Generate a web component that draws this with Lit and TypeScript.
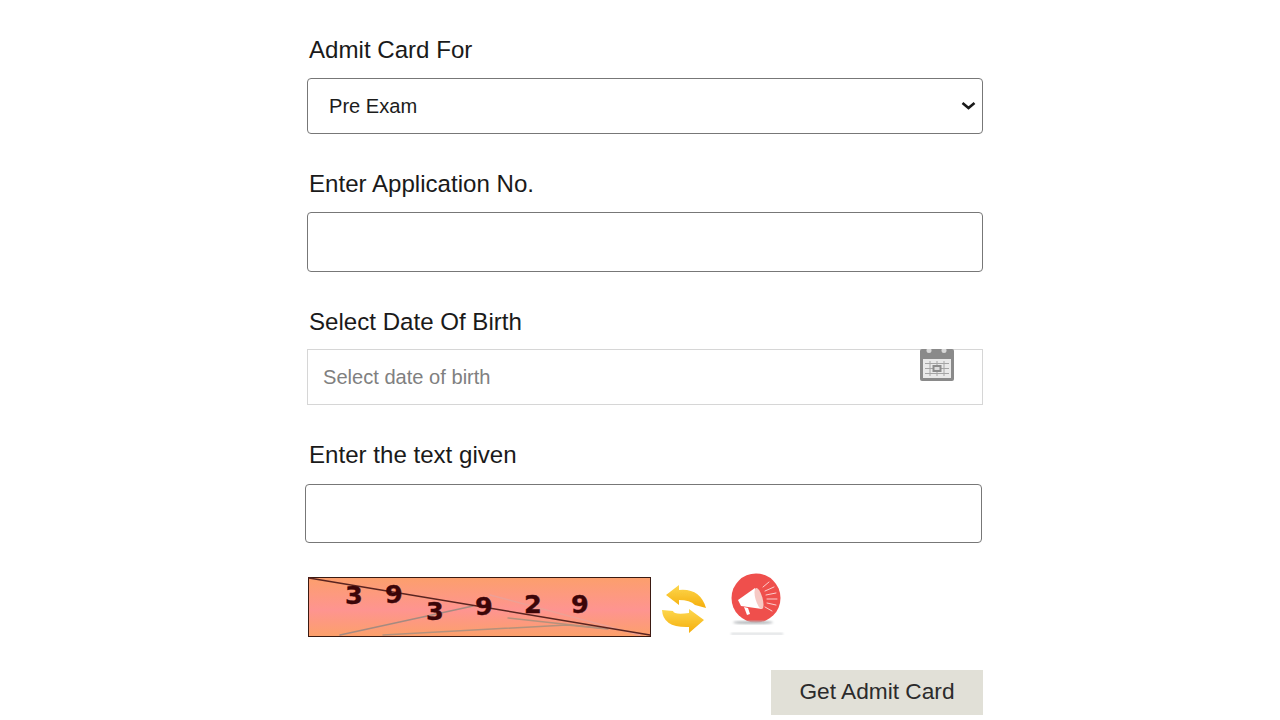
import { LitElement, html, css, svg } from "lit";
import { customElement } from "lit/decorators.js";

@customElement("app-root")
export class AppRoot extends LitElement {
  static styles = css`
    :host { display: block; background: #fff; height: 720px; overflow: hidden; font-family: "Liberation Sans", Arial, sans-serif; color: #1c1c1c; }
    .form { width: 676px; margin-left: 307px; padding-top: 36px; display: flex; flex-direction: column; }
    label { display: block; height: 28px; line-height: 28px; font-size: 24.1px; padding-left: 2px; margin-bottom: 14px; color: #1a1a1a; }
    .field { margin-bottom: 36px; }
    .field.date label { margin-bottom: 13px; }
    .field.cap label { margin-bottom: 15px; }
    .control { display: block; box-sizing: border-box; width: 100%; border: 1px solid #777; border-radius: 4px; background: #fff; font: inherit; outline: none; }
    .selwrap { position: relative; }
    select.control { height: 56px; appearance: none; -webkit-appearance: none; font-size: 20.1px; padding: 0 0 0 21px; color: #1c1c1c; }
    .chev { position: absolute; right: 7px; top: 22px; width: 15px; height: 11px; pointer-events: none; }
    input.app { height: 60px; }
    .datewrap { position: relative; }
    input.dob { height: 56px; border: 1px solid #d6d6d6; border-radius: 0; font-size: 20.1px; padding: 0 0 0 15px; color: #333; }
    input.dob::placeholder { color: #808080; opacity: 1; }
    .cal { position: absolute; left: 613px; top: 0; width: 34px; height: 33px; }
    input.capin { height: 59px; width: 677px; margin-left: -2px; }
    .caprow { display: flex; align-items: flex-start; margin-top: -6px; height: 64px; }
    .captcha { width: 343px; height: 60px; margin: 4px 0 0 1px; flex: none; }
    .refresh { width: 46px; height: 50px; margin: 11px 0 0 11px; flex: none; }
    .promo { width: 60px; height: 66px; margin: 0 0 0 18px; flex: none; }
    .actions { display: flex; justify-content: flex-end; margin-top: 33px; }
    button { width: 212px; height: 45px; background: #e1e0d7; border: none; border-radius: 0; font: inherit; font-size: 22.7px; color: #2b2b2b; padding: 0 0 2px; }
  `;

  private captcha() {
    return html`<svg class="captcha" viewBox="0 0 343 60">
      <defs>
        <linearGradient id="cg" x1="0" y1="0" x2="0" y2="1">
          <stop offset="0" stop-color="#fc9f6c"></stop>
          <stop offset="0.55" stop-color="#fe9490"></stop>
          <stop offset="1" stop-color="#fca06a"></stop>
        </linearGradient>
      </defs>
      <rect x="0.5" y="0.5" width="342" height="59" fill="url(#cg)" stroke="#3a1a12"></rect>
      <g fill="none" stroke-linecap="round">
        <path d="M32 58 L165 29" stroke="#a58a80" stroke-width="1.5"></path>
        <path d="M182 18 L332 58" stroke="#eda095" stroke-width="1.5"></path>
        <path d="M75 58 L259 48 L300 52" stroke="#b4917c" stroke-width="1.5"></path>
        <path d="M200 41 L292 51" stroke="#b4917c" stroke-width="1.3"></path>
        <path d="M1 1 L342 58" stroke="#5a2420" stroke-width="1.5"></path>
      </g>
      <g fill="#3c0508" stroke="#3c0508" stroke-width="0.4" font-family="'DejaVu Sans', sans-serif" font-weight="700" font-size="25.5">
        ${[["3", 37, 27], ["9", 77, 26], ["3", 118, 43], ["9", 167, 38], ["2", 216, 36], ["9", 263, 36]].map(
          ([t, x, y]) => svg`<text x=${x} y=${y}>${t}</text>`
        )}
      </g>
    </svg>`;
  }

  private refresh() {
    return html`<svg class="refresh" viewBox="0 0 46 50">
      <defs>
        <linearGradient id="ra" x1="0" y1="0" x2="0" y2="1">
          <stop offset="0" stop-color="#fdd84f"></stop>
          <stop offset="1" stop-color="#f5ae0c"></stop>
        </linearGradient>
        <filter id="soft"><feGaussianBlur stdDeviation="0.4"></feGaussianBlur></filter>
      </defs>
      <g fill="url(#ra)" filter="url(#soft)">
        <path d="M4 11 L17 1 L17 6 Q38 4 44 24 L33 21 Q28 16 17 16 L17 21 Z"></path>
        <path d="M42 36 L27 25 L27 29 Q12 31 11 27 L0 26 Q1 44 27 43 L27 49 Z"></path>
      </g>
    </svg>`;
  }

  private promo() {
    return html`<svg class="promo" viewBox="0 0 60 66">
      <defs>
        <filter id="sh"><feGaussianBlur stdDeviation="1"></feGaussianBlur></filter>
      </defs>
      <circle cx="30" cy="25" r="24.500" fill="#ef4f4c"></circle>
      <g fill="#fff">
        <path d="M12 27 L29 15 L36 36 L15 33 Z"></path>
        <path d="M18 34 L22 35 L24 41 L21 42 Z"></path>
      </g>
      <ellipse cx="33" cy="25.500" rx="3.500" ry="11" fill="#f6c9c4" transform="rotate(-16 33 25.500)"></ellipse>
      <g stroke="#fff" stroke-width="0.9" stroke-linecap="round" opacity=".8">
        <path d="M37 14 L43 9 M39 18 L48 14 M40 22 L50 20 M41 26 L51 26 M41 30 L50 32 M39 34 L46 38"></path>
      </g>
      <ellipse cx="27" cy="49.500" rx="20" ry="1.600" fill="#b5b9bc" filter="url(#sh)"></ellipse>
      <rect x="5" y="60" width="52" height="1.600" fill="#aab0b5" opacity=".55" filter="url(#sh)"></rect>
    </svg>`;
  }

  render() {
    return html`<div class="form">
      <div class="field">
        <label for="a">Admit Card For</label>
        <div class="selwrap">
          <select id="a" class="control"><option>Pre Exam</option></select>
          <svg class="chev" viewBox="0 0 15 11"><path d="M1.500 3 L7.500 8 L13.500 3" fill="none" stroke="#1a1a1a" stroke-width="2.600"></path></svg>
        </div>
      </div>
      <div class="field">
        <label for="b">Enter Application No.</label>
        <input id="b" class="control app" />
      </div>
      <div class="field date">
        <label for="c">Select Date Of Birth</label>
        <div class="datewrap">
          <input id="c" class="control dob" placeholder="Select date of birth" />
          <svg class="cal" viewBox="0 0 34 33">
            <rect x="0" y="0" width="34" height="32" rx="2" fill="#8a8a8a"></rect>
            <rect x="3" y="10" width="28" height="19" fill="#e9e9e9"></rect>
            <circle cx="9" cy="1.500" r="2.500" fill="#d8d8d8"></circle>
            <circle cx="24" cy="1.500" r="2.500" fill="#d8d8d8"></circle>
            <path d="M5 14.500 H29 M5 19.500 H29 M5 24.500 H29 M10 12 V27 M17 12 V27 M24 12 V27" stroke="#a5a5a5" stroke-width="1" fill="none"></path>
            <rect x="12.500" y="16" width="9" height="7" fill="#8c8c8c"></rect>
            <rect x="14.500" y="18" width="5" height="3" fill="#dcdcdc"></rect>
          </svg>
        </div>
      </div>
      <div class="field cap">
        <label for="d">Enter the text given</label>
        <input id="d" class="control capin" />
      </div>
      <div class="caprow">${this.captcha()}${this.refresh()}${this.promo()}</div>
      <div class="actions"><button>Get Admit Card</button></div>
    </div>`;
  }
}
